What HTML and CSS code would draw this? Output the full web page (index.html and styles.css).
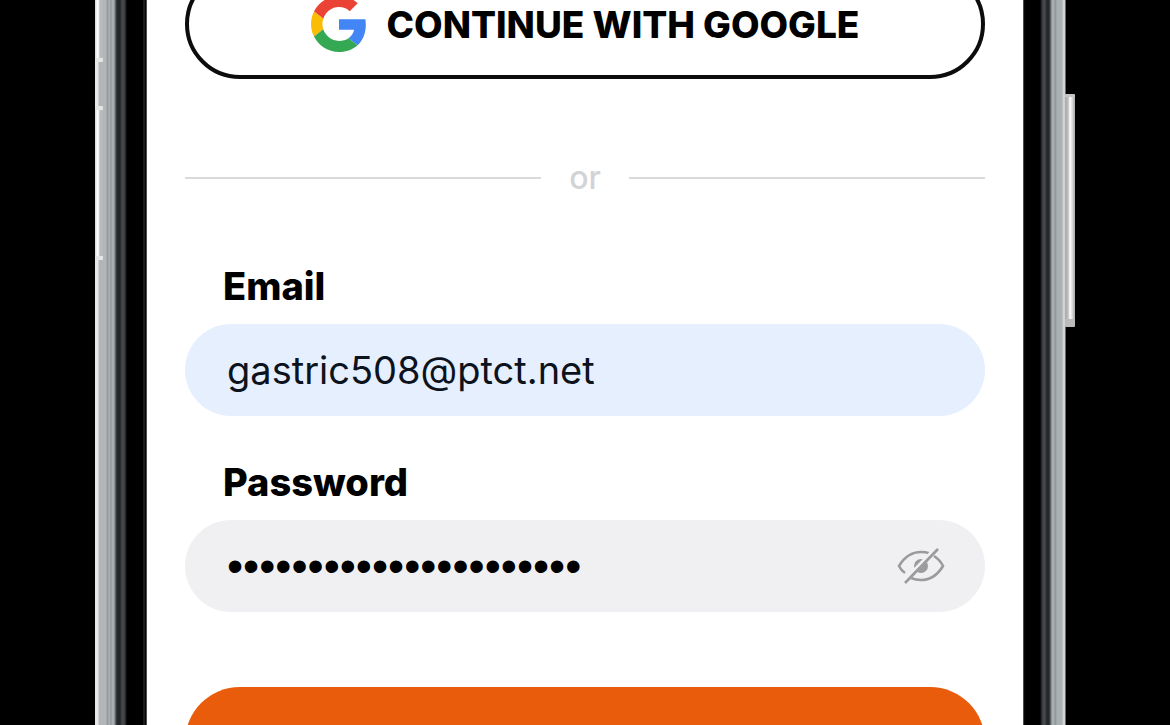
FILE: index.html
```html
<!DOCTYPE html>
<html lang="en">
<head>
    <meta charset="UTF-8">
    <meta name="viewport" content="width=device-width, initial-scale=1.0">
    <title>Log in</title>
    <link rel="stylesheet" href="styles.css">
</head>
<body>

    <div class="phone">
        <div class="rail rail-left">
            <span class="key mute"></span>
            <span class="key volume"></span>
        </div>

        <main class="screen">
            <form class="login">
                <button type="button" class="google">
                    <svg class="google-logo" viewBox="0 0 48 48" aria-hidden="true">
                        <path fill="#EA4335" d="M24 9.5c3.54 0 6.71 1.22 9.21 3.6l6.85-6.85C35.9 2.38 30.47 0 24 0 14.62 0 6.51 5.38 2.56 13.22l7.98 6.19C12.43 13.72 17.74 9.5 24 9.5z"/>
                        <path fill="#4285F4" d="M46.98 24.55c0-1.57-.15-3.09-.38-4.55H24v9.02h12.94c-.58 2.96-2.26 5.48-4.78 7.18l7.73 6c4.51-4.18 7.09-10.36 7.09-17.65z"/>
                        <path fill="#FBBC05" d="M10.53 28.59c-.48-1.45-.76-2.99-.76-4.59s.27-3.14.76-4.59l-7.98-6.19C.92 16.46 0 20.12 0 24c0 3.88.92 7.54 2.56 10.78l7.97-6.19z"/>
                        <path fill="#34A853" d="M24 48c6.48 0 11.93-2.13 15.89-5.81l-7.73-6c-2.15 1.45-4.92 2.3-8.16 2.3-6.26 0-11.57-4.22-13.47-9.91l-7.98 6.19C6.51 42.62 14.62 48 24 48z"/>
                    </svg>
                    CONTINUE WITH GOOGLE
                </button>

                <div class="divider">or</div>

                <label for="email">Email</label>
                <input type="email" id="email" class="filled" value="gastric508@ptct.net">

                <label for="password">Password</label>
                <div class="password-box">
                    <input type="password" id="password" value="abcdefghijklmnopqrstuv">
                    <button type="button" class="toggle" aria-label="Show password">
                        <svg viewBox="0 0 48 40" fill="none" stroke="#9b9b9d" stroke-width="2.6" aria-hidden="true">
                            <path d="M8 27C5 25 3 22 2 20C8 10 16 6 24 6C27 6 30 6.500 32 7.300"/>
                            <path d="M37 10C41 12.500 44 16 46 20C40 30 32 34 24 34C20 34 17 33.300 14 32"/>
                            <circle cx="24" cy="20" r="7" fill="#9b9b9d" stroke="none"/>
                            <path stroke="#f0f0f3" stroke-width="5" d="M11 32L37 5"/>
                            <path d="M8 37L41 3"/>
                        </svg>
                    </button>
                </div>

                <button type="submit" class="submit" aria-label="Log in"></button>
            </form>
        </main>

        <div class="rail rail-right">
            <span class="key power"></span>
        </div>
    </div>

</body>
</html>
```
FILE: styles.css
```css
* { box-sizing: border-box; }
body { margin: 0; background: #000; color: #000; font-family: Inter, "Liberation Sans", sans-serif; }
button, input { font-family: inherit; color: inherit; border: none; margin: 0; }

/* phone body */
.phone { display: flex; height: 100vh; padding: 0 95px; overflow: hidden; }
.rail { position: relative; flex: 0 0 52px; }
.rail-left {
    background: linear-gradient(to right,
        #e8e8e8 0 3px, #b2b6b8 4px 11px, #989c9f 12px 13px, #a9aeb1 14px 15px, #8d9295 16px, #a9aeb1 17px 19px,
        #70757a 20px, #23272a 22px 25px, #45484b 27px 29px, #1b1c1e 31px, #000 32px 48px, #333 49px, #050505 50px 51px, #999 52px);
}
.rail-right {
    background: linear-gradient(to right,
        #999 0, #050505 1px 2px, #000 3px 17px, #1b1c1e 18px, #45484b 20px 22px, #23272a 24px 26px, #70757a 28px,
        #a9aeb1 29px 31px, #8d9295 32px, #a9aeb1 34px, #a9b1b3 36px 39px, #d0d2d3 40px 42px, #000 43px);
}
.key { position: absolute; border-radius: 1px; }
.mute, .volume { left: 0; width: 8px; background: linear-gradient(to right, #ddd 0 1px, #fff 2px 3px, #b8bbbd 5px); }
.mute { top: -20px; height: 82px; border-bottom: 4px solid #e5e5e5; }
.volume { top: 106px; height: 154px; border-top: 4px solid #e5e5e5; border-bottom: 4px solid #e5e5e5; }
.power {
    top: 94px; right: 0; width: 10px; height: 233px;
    background: linear-gradient(to right, #aaa 0, #bbb 3px, #fff 5px, #ddd 7px, #a8a8a8 10px);
    border-top: 3px solid #c5c5c5; border-bottom: 8px solid #bbb;
}

/* login form, scrolled a little so the first button is cut off */
.screen { flex: 1; min-width: 0; background: #fff; padding: 0 38px; }
.login { display: flex; flex-direction: column; margin-top: -31px; }
.google {
    display: flex; align-items: center; justify-content: center; gap: 20px;
    height: 110px; flex: none;
    background: #fff; border: 4px solid #0c0c0c; border-radius: 55px;
    font-size: 37px; font-weight: 800;
}
.google-logo { width: 56px; height: 56px; flex: none; }
.divider {
    display: flex; align-items: center; gap: 28px;
    margin-top: 79px; color: #d3d3d5; font-size: 32px; font-weight: 500; line-height: 40px;
}
.divider::before, .divider::after { content: ""; flex: 1; height: 2px; background: #dadadc; }
label { margin: 46px 0 18px 38px; font-size: 38px; font-weight: 800; line-height: 40px; }
.divider + label { margin-top: 68px; }
input {
    width: 100%; height: 92px; padding: 0 42px; border-radius: 46px;
    background: #f0f0f3; font-size: 38px; outline: none;
}
.filled { background: #e6effe; color: #0d131c; }
.password-box { position: relative; }
.password-box input { display: block; padding-right: 100px; font-family: "Liberation Sans", Arial, sans-serif; font-size: 46px; }
.toggle { position: absolute; right: 40px; top: 26px; padding: 0; width: 48px; height: 40px; background: none; }
.toggle svg { display: block; width: 48px; height: 40px; }
.submit { height: 110px; flex: none; margin-top: 75px; border-radius: 55px; background: #e85c0c; }
```
